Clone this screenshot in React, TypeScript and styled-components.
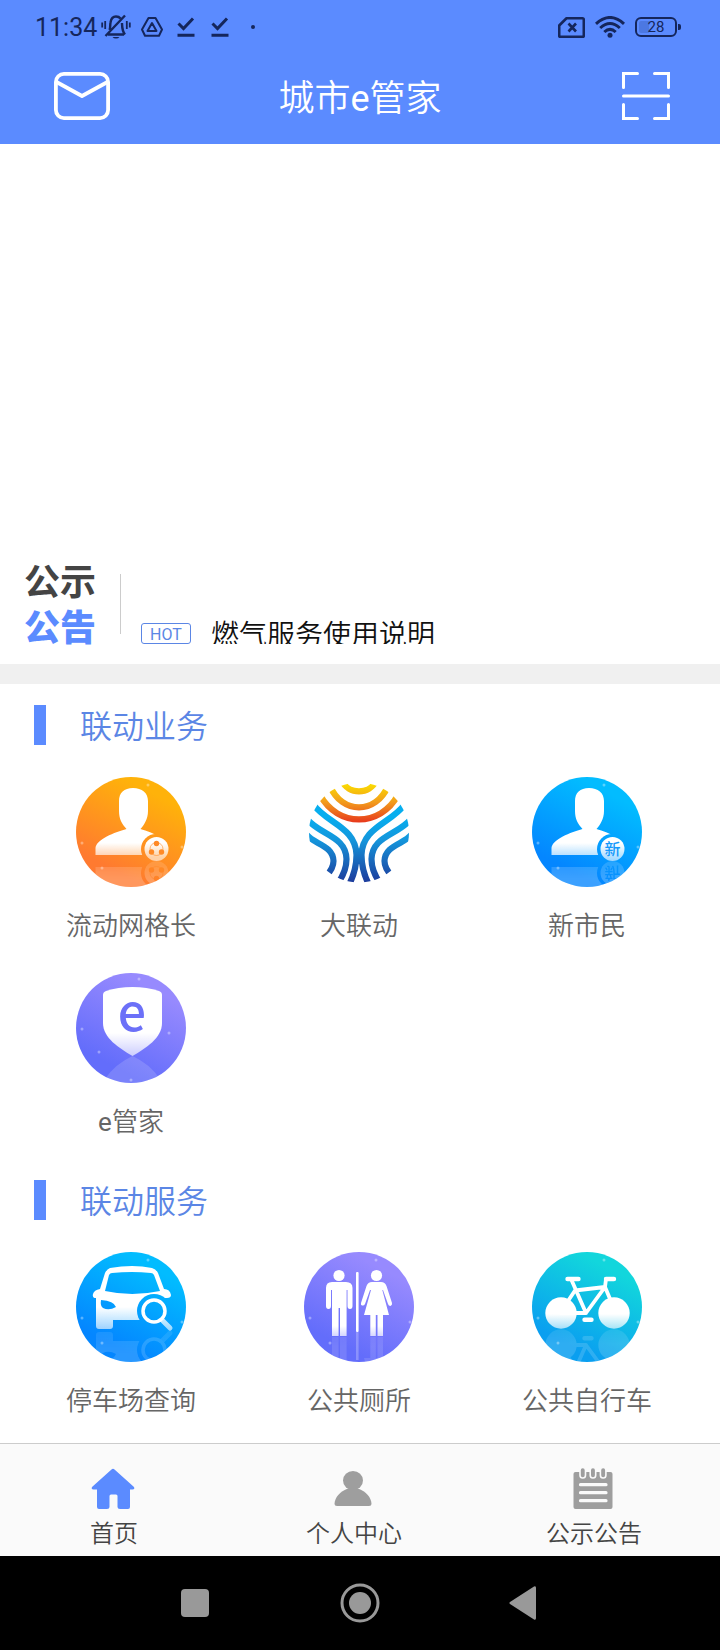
import React from 'react';
import styled, { createGlobalStyle } from 'styled-components';

const GlobalStyle = createGlobalStyle`
  *, *::before, *::after { box-sizing: border-box; }
  body {
    margin: 0;
    background: #fff;
    font-family: Roboto, "Noto Sans CJK SC", sans-serif;
    font-weight: 350;
  }
  h1, h2, ul, p { margin: 0; padding: 0; font-weight: 350; }
  ul { list-style: none; }
  svg { display: block; flex: none; }
  a { color: inherit; text-decoration: none; }
  button { border: 0; padding: 0; margin: 0; background: none; font: inherit; color: inherit; cursor: pointer; }
`;

const Page = styled.div`
  display: flex;
  flex-direction: column;
  min-height: 100vh;
`;

const Header = styled.header`
  background: #5b8bff;
  padding-bottom: 2px;
`;

const StatusBar = styled.div`
  display: flex;
  justify-content: space-between;
  align-items: center;
  height: 50px;
  padding: 4px 39px 0 35px;
  color: #15265c;
  font-weight: 400;
`;

const StatusGroup = styled.div<{ $gap: number }>`
  display: flex;
  align-items: center;
  gap: ${(p) => p.$gap}px;
`;

const Clock = styled.span`
  padding-top: 2px;
  font-size: 25px;
  line-height: 30px;
  margin-right: -6px;
`;

const Battery = styled.span`
  display: flex;
  align-items: center;
  gap: 1px;
  &::after {
    content: '';
    width: 3px;
    height: 6px;
    border-radius: 0 2px 2px 0;
    background: #15265c;
  }
`;

const BatteryLevel = styled.span`
  width: 42px;
  height: 20px;
  border: 2px solid #15265c;
  border-radius: 6px;
  background: linear-gradient(90deg, #4c78e2 28%, transparent 28%) content-box;
  padding: 2px;
  font-size: 15px;
  line-height: 13px;
  text-align: center;
`;

const Toolbar = styled.div`
  display: grid;
  grid-template-columns: 1fr auto 1fr;
  align-items: center;
  height: 92px;
  padding: 0 50px;
  color: #fff;
`;

const ToolButton = styled.button<{ $end?: boolean }>`
  justify-self: ${(p) => (p.$end ? 'end' : 'start')};
  padding-left: ${(p) => (p.$end ? 0 : 4)}px;
`;

const Title = styled.h1`
  padding-top: 5px;
  font-size: 36px;
  line-height: 48px;
`;

const Latin = styled.span`
  font-weight: 400;
`;

const Main = styled.main`
  flex: 1;
`;

const Banner = styled.div`
  height: 396px;
`;

const Notice = styled.section`
  display: flex;
  height: 124px;
  padding: 20px 24px 0;
`;

const NoticeHeading = styled.h2`
  display: flex;
  flex-direction: column;
  width: 72px;
  font-size: 36px;
  line-height: 46px;
  font-weight: 700;
  color: #444;
  white-space: nowrap;
`;

const NoticeAccent = styled.span`
  color: #5b8bff;
  font-weight: 900;
`;

const Divider = styled.span`
  width: 1px;
  height: 60px;
  margin: 14px 20px 0 24px;
  background: #ccc;
`;

const Ticker = styled.div`
  flex: 1;
  height: 84px;
  padding-top: 56px;
  overflow: hidden;
`;

const TickerItem = styled.a`
  display: flex;
  align-items: flex-start;
  gap: 20px;
  height: 40px;
  font-size: 28px;
  line-height: 40px;
  color: #111;
  white-space: nowrap;
`;

const HotTag = styled.span`
  width: 50px;
  height: 21px;
  margin-top: 7px;
  border: 1px solid #5b86e5;
  border-radius: 3px;
  font-size: 16px;
  line-height: 21px;
  font-weight: 400;
  text-align: center;
  color: #5b86e5;
`;

const Band = styled.div`
  height: 20px;
  background: #f0f0f0;
`;

const Section = styled.section`
  padding-top: 21px;
`;

const SectionTitle = styled.h2`
  display: flex;
  align-items: center;
  gap: 34px;
  height: 40px;
  padding-left: 34px;
  font-size: 32px;
  line-height: 44px;
  color: #5b86e5;
  &::before {
    content: '';
    width: 12px;
    height: 40px;
    background: #5b8bff;
  }
`;

const SectionLabel = styled.span`
  padding-top: 4px;
`;

const Grid = styled.ul`
  display: grid;
  grid-template-columns: repeat(3, 1fr);
  row-gap: 10px;
  padding: 32px 19px 0 17px;
`;

const Tile = styled.a`
  display: flex;
  flex-direction: column;
  align-items: center;
  gap: 19px;
  height: 186px;
  font-size: 26px;
  line-height: 40px;
  color: #666;
`;

const TabBar = styled.nav`
  display: grid;
  grid-template-columns: repeat(3, 1fr);
  height: 113px;
  border-top: 1px solid #ccc;
  background: #fafafa;
  padding-top: 22px;
`;

const Tab = styled.button`
  display: flex;
  flex-direction: column;
  align-items: center;
  gap: 6px;
  padding-right: 12px;
  font-size: 24px;
  line-height: 36px;
  color: #444;
  svg { margin-right: 2px; }
`;

const SystemBar = styled.nav`
  display: flex;
  justify-content: center;
  align-items: center;
  gap: 127px;
  height: 94px;
  background: #000;
`;

/* ---------- status icons ---------- */

const BellOff = () => (
  <svg width="30" height="28" viewBox="0 0 30 28" fill="none" stroke="currentColor" strokeWidth="2.400">
    <path d="M7 21.500H23M8.500 17C9.500 15 9 12 9.500 9.500C10 6 12 3.500 15 3.500C17 3.500 18.500 4.200 19.500 5.500M21 10C21.200 15 21 18 24 21.500M4.500 23L24 2.500" />
    <path d="M1.200 9.500v5M4.200 8v8M28.800 9.500v5M25.800 8v8" strokeWidth="1.800" />
    <path d="M11.500 24a4 3 0 0 0 7 0z" fill="currentColor" stroke="none" />
  </svg>
);

const Drive = () => (
  <svg width="22" height="20" viewBox="0 0 22 20" fill="none" stroke="currentColor" strokeWidth="2" strokeLinejoin="round">
    <path d="M7.500 1h7L21 12.500 18 18.800H4L1 12.500z" />
    <path d="M11 6l4.500 8h-9z" />
  </svg>
);

const Done = () => (
  <svg width="18" height="20" viewBox="0 0 18 20" fill="none" stroke="currentColor" strokeWidth="3">
    <path d="M1.500 6.500L6.500 11.500L16 1.500M.5 18.200h17" />
  </svg>
);

const Dot = () => (
  <svg width="4" height="4" viewBox="0 0 4 4">
    <circle cx="2" cy="2" r="2" fill="currentColor" />
  </svg>
);

const NoSim = () => (
  <svg width="27" height="21" viewBox="0 0 27 21" fill="none" stroke="currentColor" strokeWidth="2.600" strokeLinejoin="round">
    <path d="M8.500 1.300h16q1.300 0 1.300 1.300v16q0 1.300-1.300 1.300h-22q-1.300 0-1.300-1.300V8.500z" />
    <path d="M10.500 6.500l7.500 8M18 6.500l-7.500 8" />
  </svg>
);

const Wifi = () => (
  <svg width="30" height="22" viewBox="0 0 30 22" fill="none" stroke="currentColor" strokeWidth="3">
    <path d="M1 7.800Q15-4.800 29 7.800M5.200 12Q15 3 24.800 12M9.300 16Q15 10.600 20.700 16" />
    <circle cx="15" cy="19.200" r="2.500" fill="currentColor" stroke="none" />
  </svg>
);

/* ---------- toolbar icons ---------- */

const Mail = () => (
  <svg width="56" height="48" viewBox="0 0 56 48" fill="none" stroke="currentColor" strokeWidth="3.800">
    <rect x="1.900" y="1.900" width="52.200" height="44.200" rx="8" />
    <path d="M2.500 10L28 24L53.500 10" strokeLinejoin="round" />
  </svg>
);

const Scan = () => (
  <svg width="48" height="48" viewBox="0 0 48 48" fill="none" stroke="currentColor" strokeWidth="3" strokeLinecap="round">
    <path d="M1.500 15.500v-14h14M32.500 1.500h14v14M46.500 32.500v14h-14M15.500 46.500h-14v-14M1.500 24h45" />
  </svg>
);

/* ---------- service icons ---------- */

interface DiscProps {
  id: string;
  from: string;
  to: string;
  fadeStart: number;
  fadeEnd: number;
  sparks?: number[][];
  children: React.ReactNode;
}

const defaultSparks = [[72, 8], [6, 66], [106, 70], [26, 91]];

const Disc = ({ id, from, to, fadeStart, fadeEnd, sparks = defaultSparks, children }: DiscProps) => (
  <svg width="110" height="110" viewBox="0 0 110 110">
    <defs>
      <linearGradient id={`${id}-bg`} gradientUnits="userSpaceOnUse" x1="35" y1="92" x2="75" y2="15">
        <stop offset="0" stopColor={from} />
        <stop offset="1" stopColor={to} />
      </linearGradient>
      <linearGradient id={`${id}-ink`} gradientUnits="userSpaceOnUse" x1="0" y1={fadeStart} x2="0" y2={fadeEnd}>
        <stop offset="0" stopColor="#fff" />
        <stop offset="1" stopColor="#fff" stopOpacity="0.6" />
      </linearGradient>
      <clipPath id={`${id}-clip`}>
        <circle cx="55" cy="55" r="55" />
      </clipPath>
    </defs>
    <circle cx="55" cy="55" r="55" fill={`url(#${id}-bg)`} />
    {sparks.map(([x, y]) => (
      <circle key={`${x}-${y}`} cx={x} cy={y} r="1.500" fill="#fff" opacity="0.35" />
    ))}
    <g clipPath={`url(#${id}-clip)`}>{children}</g>
  </svg>
);

const PersonFigure = ({ id, badge }: { id: string; badge: React.ReactNode }) => (
  <>
    <mask id={`${id}-cut`} maskUnits="userSpaceOnUse" x="0" y="0" width="110" height="110">
      <rect width="110" height="110" fill="#fff" />
      <circle cx="80" cy="72" r="15" fill="#000" />
    </mask>
    <g id={`${id}-figure`}>
      <path
        mask={`url(#${id}-cut)`}
        fill={`url(#${id}-ink)`}
        d="M57 11C66 11 72 16 72 24V34C72 42 68 48 64.500 52C70 54 80 56 84 62V78H19.500V71C20 64 33 57 50.500 52C46 47 43 42 43 34V24C43 16 48 11 57 11Z"
      />
      <circle cx="80.500" cy="72" r="12" fill={`url(#${id}-ink)`} />
      {badge}
    </g>
    <use href={`#${id}-figure`} transform="translate(0 168) scale(1 -1)" opacity="0.22" />
  </>
);

const GridLeader = () => (
  <Disc id="leader" from="#ff7a30" to="#ffb20a" fadeStart={66} fadeEnd={80}>
    <PersonFigure
      id="leader"
      badge={
        <g fill="#ff8a26">
          <circle cx="80.500" cy="72" r="6.500" fill="none" stroke="#ff8a26" strokeWidth="0.600" />
          <circle cx="80.500" cy="66.500" r="2.700" />
          <circle cx="75.500" cy="75" r="2.700" />
          <circle cx="85.500" cy="75" r="2.700" />
        </g>
      }
    />
  </Disc>
);

const BadgeText = styled.text`
  font-family: "Noto Sans CJK SC", sans-serif;
  font-size: 16px;
  font-weight: 500;
  fill: #1499fb;
`;

const NewCitizen = () => (
  <Disc id="citizen" from="#0486ff" to="#02bcff" fadeStart={66} fadeEnd={84}>
    <PersonFigure id="citizen" badge={<BadgeText x="80.500" y="78" textAnchor="middle">新</BadgeText>} />
  </Disc>
);

const Linkage = () => (
  <svg width="110" height="110" viewBox="0 0 110 110">
    <defs>
      <linearGradient id="link-warm" gradientUnits="userSpaceOnUse" x1="0" y1="6" x2="0" y2="45">
        <stop offset="0" stopColor="#fbe000" />
        <stop offset="0.5" stopColor="#f29a1c" />
        <stop offset="1" stopColor="#e83a1c" />
      </linearGradient>
      <linearGradient id="link-cool" gradientUnits="userSpaceOnUse" x1="0" y1="40" x2="0" y2="105">
        <stop offset="0" stopColor="#06aeef" />
        <stop offset="0.35" stopColor="#1496dc" />
        <stop offset="1" stopColor="#1d3c9c" />
      </linearGradient>
      <clipPath id="link-clip">
        <circle cx="55" cy="55.500" r="50" />
      </clipPath>
    </defs>
    <g clipPath="url(#link-clip)" fill="none" strokeWidth="6.200">
      <g stroke="url(#link-warm)">
        <path d="M38 4A18.500 17 0 0 0 72 4" />
        <path d="M26 9C38 37.500 72 37.500 84 9" />
        <path d="M16 18C34 50.500 76 50.500 94 18" />
      </g>
      <g stroke="url(#link-cool)">
        <path d="M9 27C22 46 52 50 52.500 78C52.500 88 50 98 45 108" />
        <path d="M101 27C88 46 58 50 57.500 78C57.500 88 60 98 65 108" />
        <path d="M3 42C16 58 42 59 42.500 82C42.500 90 39 99 34 106" />
        <path d="M107 42C94 58 68 59 67.500 82C67.500 90 71 99 76 106" />
        <path d="M2 57C9 67 29 68 29.500 84C29.500 89 28 93 22 99" />
        <path d="M108 57C101 67 81 68 80.500 84C80.500 89 82 93 88 99" />
      </g>
    </g>
  </svg>
);

const ShieldLetter = styled.text`
  font-family: "Noto Sans CJK SC", sans-serif;
  font-size: 50px;
  font-weight: 500;
  fill: #6c70f8;
`;

const Butler = () => (
  <Disc
    id="butler"
    from="#636dfb"
    to="#978afe"
    fadeStart={60}
    fadeEnd={86}
    sparks={[[63, 6], [6, 56], [93, 60], [23, 79], [55, 107]]}
  >
    <path
      fill="url(#butler-ink)"
      d="M27 22Q27 19 30 18Q42 14 56.500 14Q71 14 83 18Q86 19 86 22V50C86 65 70 75 56.500 83C43 75 27 65 27 50Z"
    />
    <path d="M56.500 83Q74 91 84 106Q56 120 29 106Q39 91 56.500 83Z" fill="#fff" opacity="0.15" />
    <ShieldLetter x="56" y="58" textAnchor="middle">e</ShieldLetter>
  </Disc>
);

const Parking = () => (
  <Disc id="car" from="#0486ff" to="#02bcff" fadeStart={55} fadeEnd={78}>
    <mask id="car-cut" maskUnits="userSpaceOnUse" x="0" y="0" width="110" height="110">
      <rect width="110" height="110" fill="#fff" />
      <circle cx="78" cy="59" r="17" fill="#000" />
      <path d="M25 48Q38 49 40 55Q33 59 27 56Q24 54 25 48Z" fill="#000" />
    </mask>
    <g id="car-figure">
      <path
        mask="url(#car-cut)"
        fill="url(#car-ink)"
        fillRule="evenodd"
        d="M34 16Q57 12 76 16Q80 17 82 21L88 37Q94 37 95 43Q95 46 91 46H88L88 68H37V74Q37 77 34 77H23Q20 77 20 74V46Q16 46 17 42Q18 38 24 37L29 21Q31 17 34 16ZM36 21Q34 21 33 23L29 39Q56 45 84 39L78 23Q77 21 75 21Q56 19 36 21Z"
      />
      <circle cx="78" cy="59" r="11" fill="none" stroke="#fff" strokeWidth="3.500" />
      <path d="M87 69L94 76" stroke="url(#car-ink)" strokeWidth="5" strokeLinecap="round" />
    </g>
    <use href="#car-figure" transform="translate(0 157) scale(1 -1)" opacity="0.15" />
  </Disc>
);

const Restroom = () => (
  <Disc id="wc" from="#636dfb" to="#978afe" fadeStart={74} fadeEnd={88}>
    <g id="wc-figure" fill="url(#wc-ink)">
      <circle cx="35" cy="23.500" r="5.600" />
      <path d="M28 30H42Q48.500 30 48.500 36V54Q48.500 57 46 57Q43.500 57 43.500 54V38H42.600V84H36V56H34.600V84H28V38H27V54Q27 57 24.500 57Q22 57 22 54V36Q22 30 28 30Z" />
      <circle cx="72.500" cy="23.500" r="5.600" />
      <path d="M68 30H77Q81 30 82.500 34L88 51Q88.500 53 86.500 54Q84.500 54 84 52L79 38H78.300L85 63H79V84H73.500V63H71.800V84H66.300V63H60L67 38H66L61 52Q60 54 58 53.500Q56.500 53 57 51L62.500 34Q64 30 68 30Z" />
    </g>
    <rect x="52" y="20" width="2.600" height="60" rx="1" fill="#fff" />
    <path d="M53.300 80V108" stroke="#fff" strokeWidth="2.600" opacity="0.25" />
    <use href="#wc-figure" transform="translate(0 169) scale(1 -1)" opacity="0.12" />
  </Disc>
);

const Bicycle = () => (
  <Disc id="bike" from="#0a9ff0" to="#12d6dc" fadeStart={62} fadeEnd={78}>
    <g id="bike-figure">
      <circle cx="29" cy="61" r="15.700" fill="url(#bike-ink)" />
      <circle cx="82" cy="61" r="15.700" fill="url(#bike-ink)" />
      <g fill="none" stroke="#fff" strokeWidth="3.800" strokeLinecap="round" strokeLinejoin="round">
        <path d="M35.500 27H46.500M74 27H82M52.500 67.700H59.500" strokeWidth="4.400" />
        <path d="M39.500 28L54 61L73 35L43 38.500L34 52M29 61H54M74 27L73 35L81 54" />
      </g>
    </g>
    <use href="#bike-figure" transform="translate(0 154) scale(1 -1)" opacity="0.15" />
  </Disc>
);

/* ---------- tab icons ---------- */

const Home = () => (
  <svg width="44" height="44" viewBox="0 0 44 44">
    <path
      fill="#5b8bff"
      d="M20.500 3.500Q22 2 23.500 3.500L43 21Q44 23.500 41.500 23.500H39V41Q39 43 37 43H29Q26.500 43 26.500 41V30Q26.500 28.500 25 28.500H20Q18.500 28.500 18.500 30V41Q18.500 43 16 43H8Q6 43 6 41V23.500H2.500Q0 23.500 1 21Z"
    />
  </svg>
);

const Profile = () => (
  <svg width="44" height="44" viewBox="0 0 44 44" fill="#9e9e9e">
    <ellipse cx="22" cy="14.500" rx="10" ry="9.500" />
    <path d="M17 22.500H27C35 25 40.500 32 40.500 38Q40.500 40 38 40H6Q3.500 40 3.500 38C3.500 32 9 25 17 22.500Z" />
  </svg>
);

const Notepad = () => (
  <svg width="44" height="44" viewBox="0 0 44 44">
    <rect x="2.500" y="6" width="39" height="37" rx="2" fill="#9e9e9e" />
    <g fill="#9e9e9e" stroke="#fafafa" strokeWidth="1.600">
      <rect x="9" y="1.500" width="5.500" height="10.500" rx="2.700" />
      <rect x="19.200" y="1.500" width="5.500" height="10.500" rx="2.700" />
      <rect x="29.400" y="1.500" width="5.500" height="10.500" rx="2.700" />
    </g>
    <path d="M9.500 18.700H35M9.500 26.700H35M9.500 34.700H35" stroke="#fafafa" strokeWidth="3.200" strokeLinecap="round" />
  </svg>
);

const business = [
  { label: '流动网格长', Icon: GridLeader },
  { label: '大联动', Icon: Linkage },
  { label: '新市民', Icon: NewCitizen },
  { label: 'e管家', Icon: Butler },
];

const services = [
  { label: '停车场查询', Icon: Parking },
  { label: '公共厕所', Icon: Restroom },
  { label: '公共自行车', Icon: Bicycle },
];

const tabs = [
  { label: '首页', Icon: Home },
  { label: '个人中心', Icon: Profile },
  { label: '公示公告', Icon: Notepad },
];

/* Latin letters take the regular weight beside the lighter Chinese text. */
const MixedText = ({ text }: { text: string }) => (
  <span>
    {text.split(/([a-z]+)/i).map((part, i) => (i % 2 ? <Latin key={i}>{part}</Latin> : part))}
  </span>
);

const ServiceSection = ({ title, items }: { title: string; items: typeof business }) => (
  <Section>
    <SectionTitle>
      <SectionLabel>{title}</SectionLabel>
    </SectionTitle>
    <Grid>
      {items.map(({ label, Icon }) => (
        <li key={label}>
          <Tile href="#">
            <Icon />
            <MixedText text={label} />
          </Tile>
        </li>
      ))}
    </Grid>
  </Section>
);

export default function App() {
  return (
    <Page>
      <GlobalStyle />
      <Header>
        <StatusBar>
          <StatusGroup $gap={22}>
            <StatusGroup $gap={14}>
              <StatusGroup $gap={10}>
                <Clock>11:34</Clock>
                <BellOff />
                <Drive />
              </StatusGroup>
              <StatusGroup $gap={16}>
                <Done />
                <Done />
              </StatusGroup>
            </StatusGroup>
            <Dot />
          </StatusGroup>
          <StatusGroup $gap={10}>
            <NoSim />
            <Wifi />
            <Battery>
              <BatteryLevel>28</BatteryLevel>
            </Battery>
          </StatusGroup>
        </StatusBar>
        <Toolbar>
          <ToolButton aria-label="消息">
            <Mail />
          </ToolButton>
          <Title>
            <MixedText text="城市e管家" />
          </Title>
          <ToolButton $end aria-label="扫一扫">
            <Scan />
          </ToolButton>
        </Toolbar>
      </Header>

      <Main>
        <Banner />
        <Notice>
          <NoticeHeading>
            <span>公示</span>
            <NoticeAccent>公告</NoticeAccent>
          </NoticeHeading>
          <Divider />
          <Ticker>
            <TickerItem href="#">
              <HotTag>HOT</HotTag>
              燃气服务使用说明
            </TickerItem>
          </Ticker>
        </Notice>
        <Band />
        <ServiceSection title="联动业务" items={business} />
        <ServiceSection title="联动服务" items={services} />
      </Main>

      <TabBar>
        {tabs.map(({ label, Icon }) => (
          <Tab key={label}>
            <Icon />
            {label}
          </Tab>
        ))}
      </TabBar>
      <SystemBar>
        <button aria-label="最近任务">
          <svg width="36" height="40" viewBox="0 0 36 40">
            <rect x="4" y="6" width="28" height="28" rx="4" fill="#999" />
          </svg>
        </button>
        <button aria-label="主屏幕">
          <svg width="40" height="40" viewBox="0 0 40 40">
            <circle cx="20" cy="20" r="18" fill="none" stroke="#999" strokeWidth="3" />
            <circle cx="20" cy="20" r="11" fill="#999" />
          </svg>
        </button>
        <button aria-label="返回">
          <svg width="36" height="40" viewBox="0 0 36 40">
            <path d="M27 3.500Q29 2.500 29 5V35Q29 37.500 27 36.500L3 21Q1.500 20 3 19Z" fill="#999" />
          </svg>
        </button>
      </SystemBar>
    </Page>
  );
}
